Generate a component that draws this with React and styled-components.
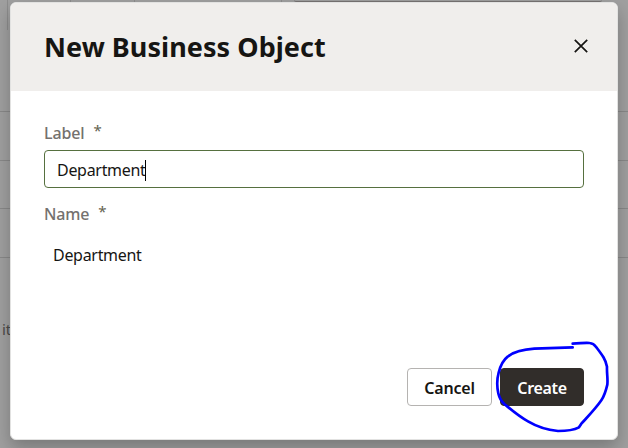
import React from "react";
import styled, { createGlobalStyle } from "styled-components";

const GlobalStyle = createGlobalStyle`
  * { box-sizing: border-box; }
  body {
    margin: 0;
    overflow: hidden;
    font-family: "Noto Sans", "Open Sans", sans-serif;
    color: #161513;
  }
`;

const Page = styled.main`
  position: relative;
  width: 628px;
  height: 448px;
  overflow: hidden;
  background: #a0a0a0;
`;

const Backdrop = styled.div`
  display: flex;
  flex-direction: column;
  height: 100%;
`;

const BackdropTabs = styled.div`
  display: flex;
  height: 30px;
  padding-left: 7px;
`;

const BackdropTab = styled.div`
  width: ${(p) => p.$width}px;
  border-left: 1px solid #8d8d8d;
`;

const BackdropField = styled.div`
  width: 308px;
  height: 2px;
  margin-left: 12px;
  border-bottom: 1px solid #777373;
  border-radius: 0 0 2px 2px;
`;

const BackdropRow = styled.div`
  height: ${(p) => p.$height}px;
  border-bottom: 1px solid #898989;
`;

const BackdropText = styled.p`
  margin: 61px 0 0 2px;
  font-size: 15px;
  line-height: 20px;
  color: #4b4a49;
`;

const Dialog = styled.section`
  position: absolute;
  left: 10px;
  top: 2px;
  display: flex;
  flex-direction: column;
  width: 608px;
  height: 438px;
  border: 1px solid #e2e2e1;
  border-radius: 6px;
  overflow: hidden;
  background: #fff;
  box-shadow: 0 8px 18px rgba(0, 0, 0, 0.25);
`;

const Header = styled.header`
  display: flex;
  align-items: center;
  justify-content: space-between;
  flex: none;
  height: 88px;
  padding: 0 28px 0 33px;
  background: #f0eeec;
`;

const Title = styled.h1`
  margin: 0;
  font-size: 27px;
  font-weight: 700;
  line-height: 36px;
  letter-spacing: 0.05px;
  white-space: nowrap;
`;

const CloseButton = styled.button`
  display: flex;
  padding: 0 0 2px;
  border: 0;
  background: none;
  color: #161513;
`;

const Form = styled.div`
  display: flex;
  flex-direction: column;
  flex: 1;
  padding: 31px 33px 0;
`;

const FieldLabel = styled.label`
  display: flex;
  gap: 9px;
  height: 22px;
  font-size: 16px;
  font-weight: 500;
  line-height: 22px;
  letter-spacing: -0.15px;
  color: #74716e;
`;

const Required = styled.span`
  font-size: 15px;
  font-weight: 400;
  line-height: 16px;
  color: #64634f;
`;

const TextField = styled.div`
  display: flex;
  align-items: center;
  height: 38px;
  margin: 6px 0 15px;
  padding: 2px 0 0 12px;
  border: 1px solid #56703f;
  border-radius: 4px;
`;

const Value = styled.span`
  font-size: 16px;
  line-height: 22px;
  letter-spacing: -0.3px;
`;

const Caret = styled.span`
  width: 1px;
  height: 21px;
  margin-left: -1px;
  background: #000;
`;

const ReadonlyField = styled.div`
  padding: 19px 0 0 9px;
  display: flex;
`;

const Footer = styled.footer`
  display: flex;
  justify-content: flex-end;
  gap: 8px;
  padding: 0 33px 33px;
`;

const Button = styled.button`
  height: 38px;
  width: ${(p) => (p.$primary ? 84 : 85)}px;
  padding: 2px 0 0;
  border: 1px solid ${(p) => (p.$primary ? "#312d2a" : "#b5b3b1")};
  border-radius: 4px;
  background: ${(p) => (p.$primary ? "#312d2a" : "#fff")};
  color: ${(p) => (p.$primary ? "#fff" : "#161513")};
  font-family: inherit;
  font-size: 16px;
  font-weight: 600;
  line-height: 22px;
  letter-spacing: ${(p) => (p.$primary ? -0.35 : -0.2)}px;
`;

const Annotation = styled.svg`
  position: absolute;
  left: 480px;
  top: 330px;
  pointer-events: none;
`;

export default function App() {
  return (
    <>
      <GlobalStyle />
      <Page>
        <Backdrop>
          <BackdropTabs>
            <BackdropTab $width={63} />
            <BackdropTab $width={64} />
            <BackdropTab $width={147} />
            <BackdropTab $width={1} />
            <BackdropField />
          </BackdropTabs>
          <BackdropRow $height={82} />
          <BackdropRow $height={49} />
          <BackdropRow $height={48} />
          <BackdropRow $height={49} />
          <BackdropText>it</BackdropText>
        </Backdrop>
        <Dialog role="dialog" aria-label="New Business Object">
          <Header>
            <Title>New Business Object</Title>
            <CloseButton aria-label="Close">
              <svg width="16" height="16" viewBox="0 0 16 16" fill="none" stroke="currentColor" strokeWidth="1.7">
                <path d="M1.8 1.8 14.2 14.2M14.2 1.8 1.8 14.2" />
              </svg>
            </CloseButton>
          </Header>
          <Form>
            <FieldLabel>
              Label <Required>*</Required>
            </FieldLabel>
            <TextField>
              <Value>Department</Value>
              <Caret />
            </TextField>
            <FieldLabel>
              Name <Required>*</Required>
            </FieldLabel>
            <ReadonlyField>
              <Value>Department</Value>
            </ReadonlyField>
          </Form>
          <Footer>
            <Button>Cancel</Button>
            <Button $primary>Create</Button>
          </Footer>
        </Dialog>
        <Annotation
          width="148"
          height="118"
          viewBox="0 0 444 354"
          fill="none"
          stroke="#0000ff"
          strokeWidth="8"
          strokeLinecap="round"
          strokeLinejoin="round"
        >
          <path d="M278 41C300 41 312 37 329 39C341 40 344 45 350 53C366 74 377 88 381 110C380 130 384 145 382 164C378 181 373 198 364 211C347 236 326 257 304 281L297 292C276 303 256 303 234 303C205 300 171 290 144 274C117 260 97 242 73 222C62 212 58 203 55 190C51 172 50 150 56 128C61 108 70 90 83 80C104 63 134 58 163 56L278 52" />
        </Annotation>
      </Page>
    </>
  );
}
